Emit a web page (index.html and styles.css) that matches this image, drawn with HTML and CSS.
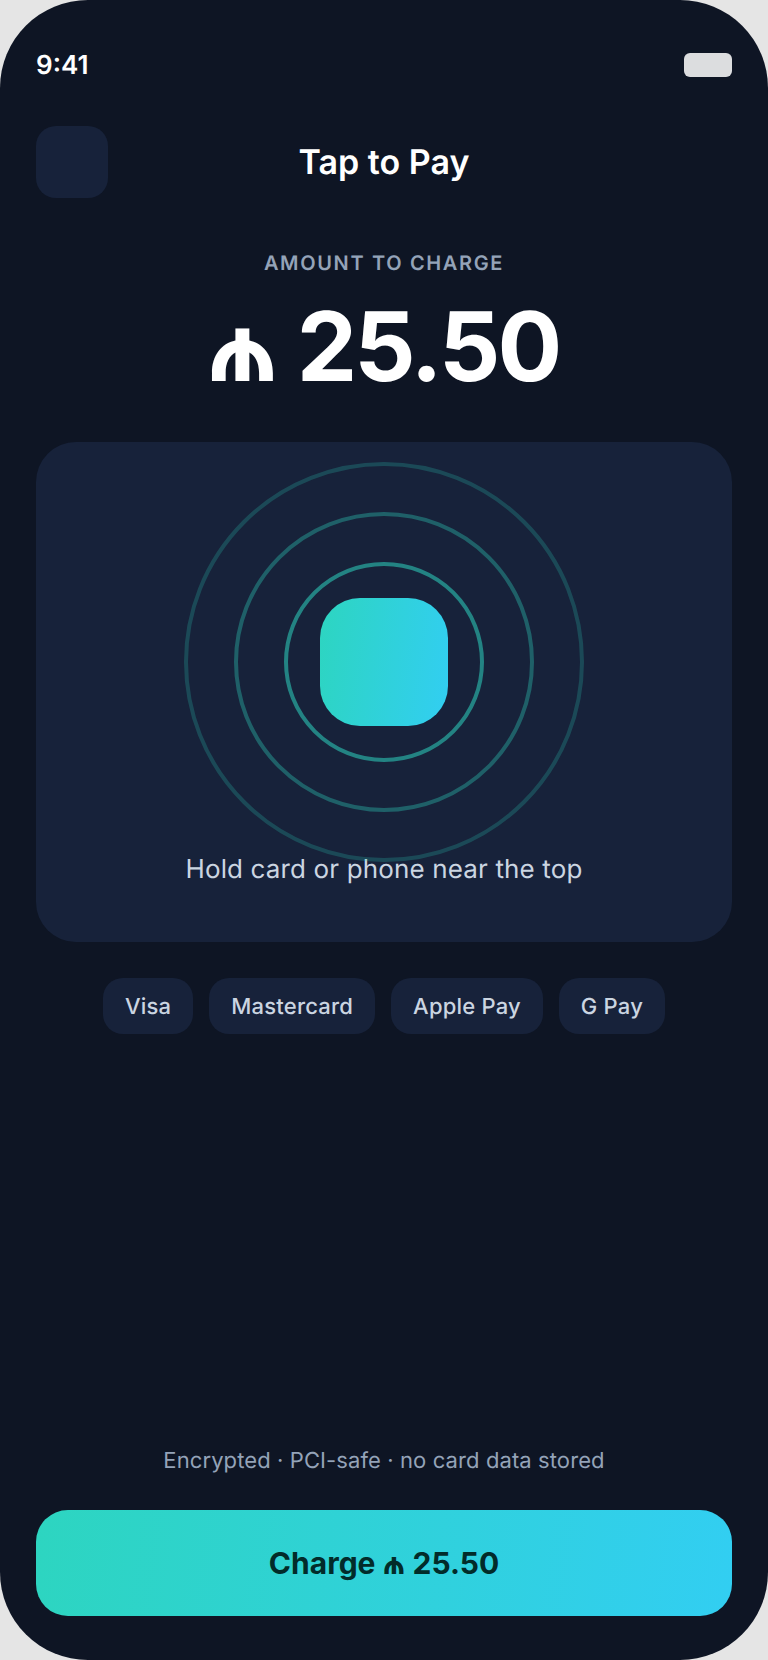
FILE: index.html
```html
<!DOCTYPE html>
<html lang="en">
<head>
    <meta charset="UTF-8">
    <meta name="viewport" content="width=device-width, initial-scale=1.0">
    <title>Tap to Pay</title>
    <link rel="stylesheet" href="styles.css">
</head>
<body>
    <div class="phone">
        <div class="status-bar">
            <span class="time">9:41</span>
            <span class="battery"></span>
        </div>

        <div class="top-bar">
            <button class="back-btn" aria-label="Back"></button>
            <h1 class="title">Tap to Pay</h1>
        </div>

        <div class="amount-block">
            <div class="amount-label">AMOUNT TO CHARGE</div>
            <div class="amount">₼ 25.50</div>
        </div>

        <div class="tap-panel">
            <div class="radar">
                <span class="ring ring-3"></span>
                <span class="ring ring-2"></span>
                <span class="ring ring-1"></span>
                <span class="chip"></span>
            </div>
            <p class="hint">Hold card or phone near the top</p>
        </div>

        <div class="methods">
            <span class="method">Visa</span>
            <span class="method">Mastercard</span>
            <span class="method">Apple Pay</span>
            <span class="method">G Pay</span>
        </div>

        <div class="footer">
            <p class="secure-note">Encrypted · PCI-safe · no card data stored</p>
            <button class="charge-btn">Charge ₼ 25.50</button>
        </div>
    </div>
</body>
</html>
```

FILE: styles.css
```css
* {
    box-sizing: border-box;
}
body {
    margin: 0;
    background-color: #e5e5e5;
    font-family: Inter, "Noto Sans", sans-serif;
    text-rendering: geometricPrecision;
}
.phone {
    width: 768px;
    height: 1660px;
    padding: 0 36px 44px;
    border-radius: 88px;
    background-color: #0e1524;
    display: flex;
    flex-direction: column;
    overflow: hidden;
}
.status-bar {
    height: 126px;
    padding-top: 49px;
    display: flex;
    justify-content: space-between;
    align-items: flex-start;
}
.time {
    font-size: 26px;
    line-height: 34px;
    font-weight: 600;
    color: #fff;
}
.battery {
    width: 48px;
    height: 24px;
    margin-top: 4px;
    border-radius: 6px;
    background-color: #dcdddf;
}
.top-bar {
    display: flex;
    align-items: center;
    height: 72px;
}
.back-btn {
    width: 72px;
    height: 72px;
    border: none;
    border-radius: 20px;
    background-color: #17223a;
}
.title {
    flex: 1;
    margin: 0 72px 0 0;
    text-align: center;
    font-size: 34px;
    font-weight: 600;
    color: #fff;
}
.amount-block {
    text-align: center;
    margin-top: 53px;
}
.amount-label {
    font-size: 20px;
    line-height: 24px;
    font-weight: 600;
    letter-spacing: 1.65px;
    color: #94a3b8;
}
.amount {
    margin-top: 20px;
    padding-right: 3px;
    font-size: 96px;
    line-height: 104px;
    font-weight: 700;
    letter-spacing: -2.9px;
    word-spacing: 1px;
    color: #fff;
}
.tap-panel {
    margin-top: 43px;
    height: 500px;
    padding-top: 20px;
    border-radius: 40px;
    background-color: #17223a;
    display: flex;
    flex-direction: column;
    align-items: center;
}
.radar {
    width: 400px;
    height: 400px;
    display: grid;
    place-items: center;
}
.ring,
.chip {
    grid-area: 1 / 1;
}
.ring {
    border-radius: 50%;
    border: 4px solid #2dd4bf;
}
.ring-1 {
    width: 200px;
    height: 200px;
    opacity: 0.55;
}
.ring-2 {
    width: 300px;
    height: 300px;
    opacity: 0.35;
}
.ring-3 {
    width: 400px;
    height: 400px;
    opacity: 0.22;
}
.chip {
    width: 128px;
    height: 128px;
    border-radius: 40px;
    background: linear-gradient(98deg, #2dd5c0, #32cef2);
}
.hint {
    margin: -8px 0 0;
    font-size: 26px;
    line-height: 32px;
    letter-spacing: 0.14px;
    color: #cbd5e1;
}
.methods {
    margin-top: 36px;
    display: flex;
    justify-content: center;
    gap: 16px;
}
.method {
    height: 56px;
    padding: 0 22px;
    border-radius: 20px;
    background-color: #17223a;
    font-size: 22px;
    font-weight: 500;
    line-height: 58px;
    letter-spacing: 0.2px;
    color: #cbd5e1;
}
.footer {
    margin-top: auto;
}
.secure-note {
    margin: 0 0 35px;
    text-align: center;
    font-size: 22px;
    line-height: 28px;
    letter-spacing: 0.1px;
    color: #94a3b8;
}
.charge-btn {
    display: block;
    width: 100%;
    height: 106px;
    border: none;
    border-radius: 32px;
    background: linear-gradient(98deg, #2dd5c0, #32cef2);
    font-family: inherit;
    font-size: 30px;
    font-weight: 700;
    color: #022c2a;
}
```
